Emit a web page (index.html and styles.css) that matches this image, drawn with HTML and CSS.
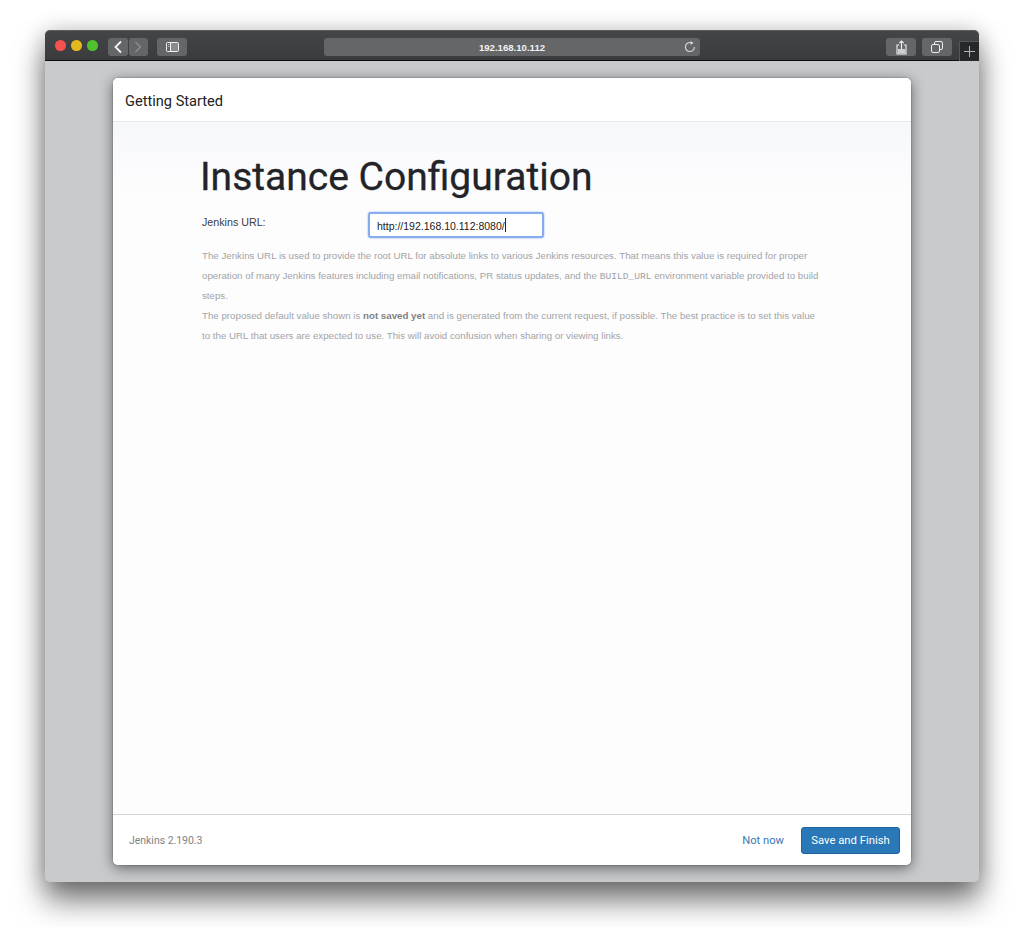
FILE: index.html
```html
<!doctype html>
<html>
	<head>
		<meta charset="utf-8" />
		<meta name="viewport" content="width=device-width, initial-scale=1" />
		<title>Jenkins setup</title>

		<link rel="stylesheet" href="styles.css">
	</head>
	<body>
		<div class="shot">
			<div class="window">
				<div class="toolbar">
					<div class="lights">
						<span class="light red"></span>
						<span class="light yellow"></span>
						<span class="light green"></span>
					</div>
					<div class="nav">
						<span class="tool tool-nav">
							<svg width="10" height="14" viewBox="0 0 10 14"><path d="M8 1.500 2.500 7 8 12.500" fill="none" stroke="#f4f4f4" stroke-width="1.800"/></svg>
						</span>
						<span class="tool tool-nav">
							<svg width="10" height="14" viewBox="0 0 10 14"><path d="M2.500 2 7.500 7l-5 5" fill="none" stroke="#8c8d8e" stroke-width="1.400"/></svg>
						</span>
					</div>
					<span class="tool tool-wide tool-sidebar">
						<svg width="13" height="10" viewBox="0 0 13 10"><rect x=".5" y=".5" width="12" height="9" rx="1" fill="#8a8b8d" stroke="#eee"/><rect x="1" y="1" width="3.500" height="8" fill="#646668"/><path d="M4.500 1v8" stroke="#eee"/><path d="M2 2.500h1.500M2 4.500h1.500" stroke="#b5b5b5"/></svg>
					</span>
					<div class="address">
						<span class="host">192.168.10.112</span>
						<svg class="reload" width="12" height="12" viewBox="0 0 12 12"><path d="M7.600 1.900A4.500 4.500 0 1 0 10.400 6" fill="none" stroke="#dcdcdc" stroke-width="1.100"/><path d="M6.600 0 9.400 2 6.600 3.900z" fill="#dcdcdc"/></svg>
					</div>
					<span class="tool tool-wide tool-share">
						<svg width="11" height="15" viewBox="0 0 11 15"><path d="M3.200 5H1v9h9V5H7.800" fill="none" stroke="#f0f0f0" stroke-width="1.100"/><rect x="2" y="9" width="7" height="4.500" fill="#cfcfcf"/><path d="M5.500 9V1.200M3.300 3.200l2.200-2.200 2.200 2.200" fill="none" stroke="#f0f0f0" stroke-width="1.200"/></svg>
					</span>
					<span class="tool tool-wide tool-tabs">
						<svg width="12" height="12" viewBox="0 0 12 12"><rect x="3.500" y=".5" width="8" height="8" rx="1.500" fill="none" stroke="#eee"/><rect x=".5" y="3.500" width="8" height="8" rx="1.500" fill="#646668" stroke="#eee"/></svg>
					</span>
					<span class="new-tab">
						<svg width="11" height="11" viewBox="0 0 11 11"><path d="M5.500 0v11M0 5.500h11" stroke="#b4b5b6" stroke-width="1"/></svg>
					</span>
				</div>

				<div class="stage">
					<div class="dialog">
						<header class="dialog-header">Getting Started</header>
						<main class="dialog-body">
							<h1>Instance Configuration</h1>
							<div class="field">
								<label for="root_url">Jenkins URL:</label>
								<div class="url-input" id="root_url">http://192.168.10.112:8080/<span class="caret"></span></div>
							</div>
							<p class="help">
								The Jenkins URL is used to provide the root URL for absolute links to various Jenkins resources. That means this value is required for proper operation of many Jenkins features including email notifications, PR status updates, and the <code>BUILD_URL</code> environment variable provided to build steps.
							</p>
							<p class="help">
								The proposed default value shown is <strong>not saved yet</strong> and is generated from the current request, if possible. The best practice is to set this value to the URL that users are expected to use. This will avoid confusion when sharing or viewing links.
							</p>
						</main>
						<footer class="dialog-footer">
							<span class="version">Jenkins 2.190.3</span>
							<a class="skip" href="#">Not now</a>
							<button type="button" class="save">Save and Finish</button>
						</footer>
					</div>
				</div>
			</div>
		</div>
	</body>
</html>
```

FILE: styles.css
```css
* {
	box-sizing: border-box;
}

html {
	--font-ui: Roboto, sans-serif;
	--font-body: "Liberation Sans", sans-serif;
}

body {
	margin: 0;
	background: #fff;
}

.shot {
	height: 927px;
	padding: 30px 45px 0;
	overflow: hidden;
}

.window {
	height: 852px;
	border-radius: 5px;
	background: #c9cacc;
	box-shadow: 0 18px 30px rgba(0, 0, 0, 0.55), 0 0 22px rgba(0, 0, 0, 0.18);
	display: flex;
	flex-direction: column;
}

.toolbar {
	height: 31px;
	flex: none;
	display: flex;
	align-items: flex-start;
	padding: 7px 0 0 10px;
	background: linear-gradient(#434548, #393b3d);
	border-top: 1px solid #5c5d60;
	border-bottom: 1px solid #0d0d0d;
	border-radius: 5px 5px 0 0;
}

.lights {
	display: flex;
	gap: 5.500px;
	padding-top: 2px;
	margin-right: 10.500px;
}

.light {
	width: 10.500px;
	height: 10.500px;
	border-radius: 50%;
}

.red {
	background: #f6524e;
}

.yellow {
	background: #e3b920;
}

.green {
	background: #4ec12e;
}

.nav {
	display: flex;
	gap: 1px;
	margin-right: 9px;
}

.tool {
	height: 18px;
	display: flex;
	align-items: center;
	justify-content: center;
	background: #646668;
	border-radius: 3px;
}

.tool-nav {
	width: 19.500px;
}

.tool-wide {
	width: 30px;
}

.address {
	width: 376px;
	height: 18px;
	margin-left: 137px;
	margin-right: 186px;
	display: flex;
	align-items: center;
	justify-content: center;
	position: relative;
	background: #646668;
	border-radius: 3px;
}

.host {
	font: bold 9.600px var(--font-body);
	color: #f2f2f2;
}

.reload {
	position: absolute;
	right: 4px;
	top: 3px;
}

.tool-tabs {
	margin-left: 6px;
	margin-right: 7px;
}

.new-tab {
	width: 20px;
	height: 20px;
	margin-top: 3px;
	display: flex;
	align-items: center;
	justify-content: center;
	background: #26282a;
	border-left: 1px solid #55575a;
	border-top: 1px solid #55575a;
}

.stage {
	flex: 1;
	padding: 17px 68px;
	min-height: 0;
}

.dialog {
	height: 787px;
	display: flex;
	flex-direction: column;
	background: #fff;
	border-radius: 5px;
	box-shadow: 0 3px 14px rgba(0, 0, 0, 0.5), 0 0 2px rgba(0, 0, 0, 0.4);
}

.dialog-header {
	height: 44px;
	flex: none;
	padding: 14px 12px 0;
	font: 14.600px/18px var(--font-ui);
	color: #222;
	background: #fff;
	border-radius: 5px 5px 0 0;
	border-bottom: 1px solid #e8e9eb;
}

.dialog-body {
	flex: 1;
	padding: 31px 88px 0;
	background: linear-gradient(#f7f8fa, #fdfdfe 80px, #fdfdfe);
}

h1 {
	margin: 0 0 10px -1px;
	font: 400 39px/48px var(--font-ui);
	color: #222327;
	-webkit-text-stroke: 0.3px #222327;
}

.field {
	display: flex;
	align-items: flex-start;
	margin: 0 0 8px 1px;
}

.field label {
	width: 166px;
	margin-top: 2px;
	font: 10.700px/18px var(--font-body);
	color: #3c3c3e;
}

.url-input {
	width: 176px;
	height: 26px;
	margin-top: 1px;
	padding: 0 0 0 7px;
	font: 10.500px/24px var(--font-body);
	color: #222;
	background: #fff;
	border: 2px solid #86acee;
	border-radius: 3px;
	box-shadow: 0 0 2px #86acee;
}

.caret {
	display: inline-block;
	width: 1px;
	height: 14px;
	vertical-align: -2px;
	background: #222;
}

.help {
	margin: 0 0 0 1px;
	width: 618px;
	font: 9.720px/20px var(--font-body);
	color: #a3a4a6;
}

.help strong {
	color: #808184;
}

.help code {
	font: 9.600px "Liberation Mono", monospace;
	color: #a0a1a3;
}

.dialog-footer {
	height: 51px;
	flex: none;
	display: flex;
	align-items: center;
	padding: 0 11px 0 16px;
	background: #fff;
	border-top: 1px solid #d3d5d7;
	border-radius: 0 0 5px 5px;
}

.version {
	margin-right: auto;
	font: 10.450px var(--font-ui);
	color: #808185;
}

.skip {
	margin-right: 17px;
	font: 11.200px var(--font-ui);
	color: #3a78b4;
	text-decoration: none;
}

.save {
	width: 99px;
	height: 27px;
	padding: 0;
	font: 11.300px var(--font-ui);
	color: #fff;
	background: #2a78b8;
	border: 1px solid #1f63a3;
	border-radius: 3px;
}
```
